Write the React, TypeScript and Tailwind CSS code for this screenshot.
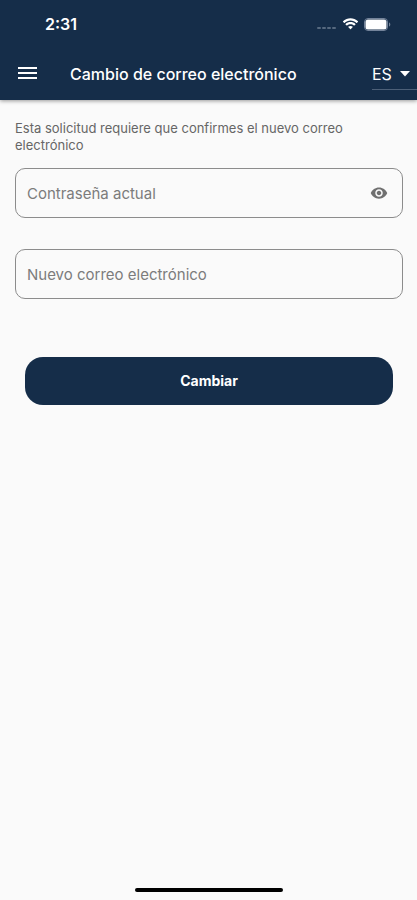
import { useState } from 'react';

function StatusBar() {
  return (
    <div className="flex h-12 items-center justify-between pl-[45px] pr-[26px]">
      <span className="text-base font-semibold">2:31</span>
      <div className="flex items-center gap-[5px]">
        <svg width="20" height="12" viewBox="0 0 20 12" fill="#56697f" aria-hidden="true">
          <rect x="0" y="9" width="4" height="2" rx="1" />
          <rect x="5" y="9" width="4" height="2" rx="1" />
          <rect x="10" y="9" width="4" height="2" rx="1" />
          <rect x="15" y="9" width="4" height="2" rx="1" />
        </svg>
        <svg width="17" height="12" viewBox="0 0 17 12" fill="white" aria-hidden="true">
          <path d="M8.5 2.5c2.3 0 4.4.9 6 2.4.1.1.3.1.4 0l1.1-1.2c.1-.1.1-.3 0-.4-4.2-4-10.8-4-15 0-.1.1-.1.3 0 .4l1.1 1.2c.1.1.3.1.4 0 1.600-1.500 3.700-2.400 6-2.400z" />
          <path d="M8.5 6.300c1.300 0 2.500.5 3.400 1.300.1.1.3.1.4 0l1.200-1.200c.1-.1.1-.3 0-.4-2.800-2.600-7.200-2.600-10 0-.1.1-.1.3 0 .4l1.200 1.200c.1.1.3.1.4 0 .9-.8 2.100-1.300 3.400-1.300z" />
          <path d="M10.800 9.100c.1-.1.1-.3 0-.4-1.300-1.100-3.300-1.100-4.600 0-.1.1-.1.3 0 .4l2.100 2.100c.1.1.3.1.4 0z" />
        </svg>
        <svg width="27" height="13" viewBox="0 0 27 13" aria-hidden="true">
          <rect x="0.5" y="0.5" width="23" height="12" rx="3.500" fill="none" stroke="#73839a" />
          <rect x="1.500" y="1.500" width="21" height="10" rx="2.500" fill="white" />
          <path d="M25 4.500v4c.8-.3 1.300-1.100 1.300-2s-.5-1.700-1.300-2z" fill="#73839a" />
        </svg>
      </div>
    </div>
  );
}

function AppBar() {
  const [language, setLanguage] = useState('ES');

  return (
    <header className="relative bg-[#152d49] text-white shadow-[0_1px_4px_rgba(0,0,0,0.4)]">
      <StatusBar />
      <div className="flex h-[52px] items-center pl-[18px]">
        <button type="button" aria-label="Abrir menú" className="mr-8 flex h-10 w-5 items-center">
          <svg width="20" height="14" viewBox="0 0 20 14" fill="white" aria-hidden="true">
            <rect x="0" y="0" width="19" height="2" />
            <rect x="0" y="5" width="19" height="2" />
            <rect x="0" y="10" width="19" height="2" />
          </svg>
        </button>
        <h1 className="flex-1 whitespace-nowrap text-base font-medium">Cambio de correo electrónico</h1>
        <div className="relative h-8 w-[45px] border-b border-[#4d6078]">
          <select
            aria-label="Idioma"
            value={language}
            onChange={e => setLanguage(e.target.value)}
            className="h-full w-full appearance-none bg-transparent text-base outline-none"
          >
            <option value="ES">ES</option>
            <option value="EN">EN</option>
          </select>
          <svg
            className="pointer-events-none absolute right-[7px] top-[13px]"
            width="10"
            height="6"
            viewBox="0 0 10 6"
            fill="white"
            aria-hidden="true"
          >
            <path d="M0 0h10L5 5.500z" />
          </svg>
        </div>
      </div>
    </header>
  );
}

export default function App() {
  const [showPassword, setShowPassword] = useState(false);

  return (
    <div className="flex min-h-screen flex-col bg-[#fafafa] font-['Inter','Liberation_Sans',sans-serif]">
      <AppBar />
      <main className="flex-1 pl-[15px] pr-[14px] pt-5">
        <form onSubmit={e => e.preventDefault()}>
          <p className="text-[13px] leading-[17px] text-[#666666]">
            Esta solicitud requiere que confirmes el nuevo correo electrónico
          </p>
          <div className="mt-[14px] flex h-[50px] items-center rounded-[10px] border border-[#8c8c8c] pl-[11px] pr-[14px]">
            <input
              type={showPassword ? 'text' : 'password'}
              aria-label="Contraseña actual"
              placeholder="Contraseña actual"
              className="h-full min-w-0 flex-1 bg-transparent text-[15px] text-gray-800 outline-none placeholder:text-[#7c7c7c]"
            />
            <button type="button" aria-label="Mostrar contraseña" onClick={() => setShowPassword(!showPassword)}>
              <svg width="18" height="18" viewBox="0 0 24 24" fill="#707070" aria-hidden="true">
                <path d="M12 4.500C7 4.500 2.730 7.610 1 12c1.730 4.390 6 7.500 11 7.500s9.270-3.110 11-7.500c-1.730-4.390-6-7.500-11-7.500zM12 17c-2.760 0-5-2.240-5-5s2.240-5 5-5 5 2.240 5 5-2.240 5-5 5zm0-8c-1.660 0-3 1.340-3 3s1.340 3 3 3 3-1.340 3-3-1.340-3-3-3z" />
              </svg>
            </button>
          </div>
          <div className="mt-[31px] flex h-[50px] items-center rounded-[10px] border border-[#8c8c8c] px-[11px]">
            <input
              type="email"
              aria-label="Nuevo correo electrónico"
              placeholder="Nuevo correo electrónico"
              className="h-full min-w-0 flex-1 bg-transparent text-[15px] text-gray-800 outline-none placeholder:text-[#7c7c7c]"
            />
          </div>
          <div className="mt-[58px] px-[10px]">
            <button type="submit" className="h-12 w-full rounded-[18px] bg-[#152d49] text-sm font-bold text-white">
              Cambiar
            </button>
          </div>
        </form>
      </main>
      <div className="flex justify-center pb-2">
        <div className="h-1 w-[148px] rounded-full bg-black" />
      </div>
    </div>
  );
}
